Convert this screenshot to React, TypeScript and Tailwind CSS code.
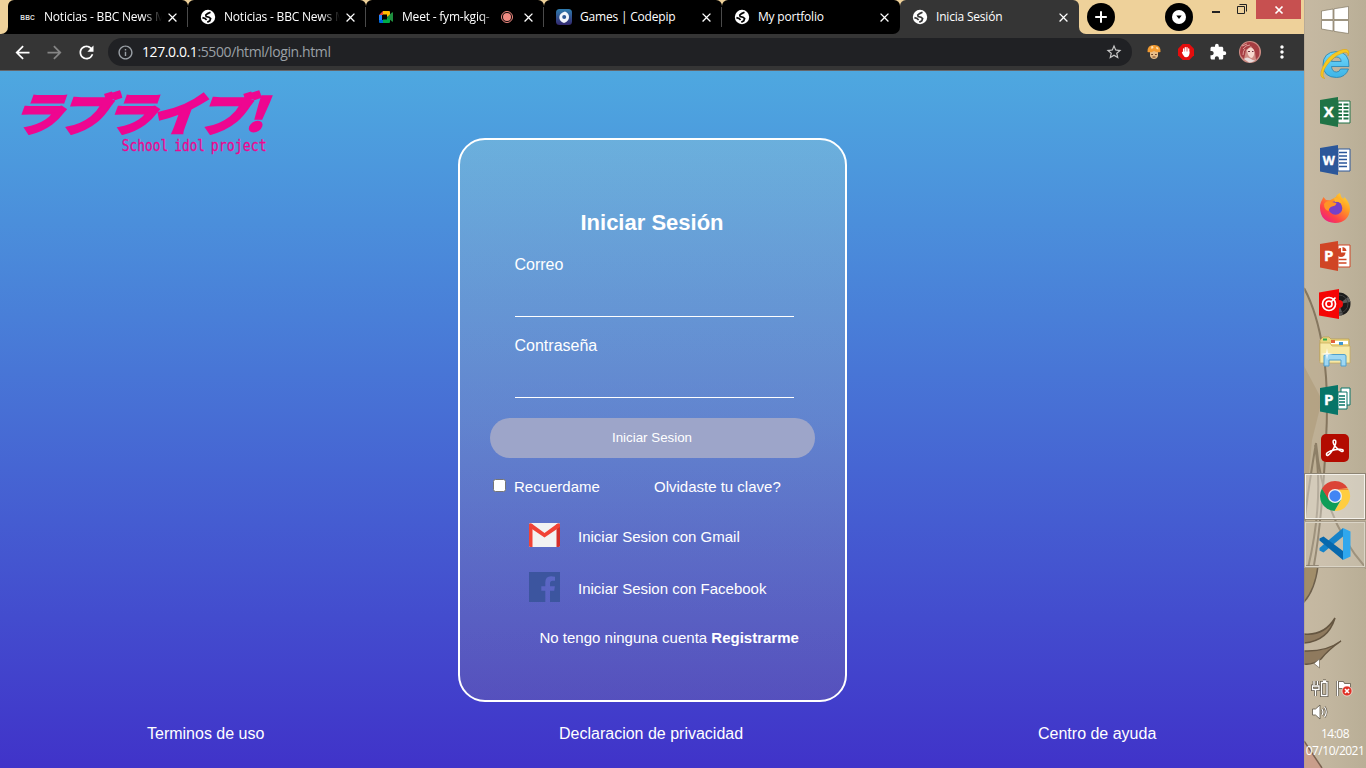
import type { ReactNode } from 'react';
import {
  MdArrowBack,
  MdArrowForward,
  MdClose,
  MdExtension,
  MdInfoOutline,
  MdMoreVert,
  MdRefresh,
  MdStarBorder,
} from 'react-icons/md';

const UI = "font-['Open_Sans','Noto_Sans',sans-serif]";

function Globe({ hole }: { hole: string }) {
  return (
    <svg width="16" height="16" viewBox="0 0 16 16" className="shrink-0">
      <circle cx="8" cy="8" r="7.200" fill="#fff" />
      <path
        d="M10.500 3.300 7.600 4.600 5.800 6 6.200 7.600 9 8.200 10.600 9.600 9.800 11.800 7.300 13.200M2.400 8.600 5 9.400 6.600 11"
        fill="none"
        stroke={hole}
        strokeWidth="1.700"
      />
    </svg>
  );
}

function BbcIcon() {
  return (
    <svg width="16" height="16" viewBox="0 0 16 16" className="shrink-0">
      <g fontSize="6.600" fontFamily="Liberation Sans" fontWeight="700" fill="#ddd">
        <text x=".3" y="10.500">B</text>
        <text x="5.200" y="10.500">B</text>
        <text x="10" y="10.500">C</text>
      </g>
    </svg>
  );
}

function MeetIcon() {
  return (
    <svg width="16" height="16" viewBox="0 0 16 16" className="shrink-0">
      <path d="M1 6 5 2v4Z" fill="#ea4335" />
      <path d="M1 6h3v5H1Z" fill="#2684fc" />
      <path d="M1 11h4v3H2a1 1 0 0 1-1-1Z" fill="#0066da" />
      <path d="M5 2h6a1 1 0 0 1 1 1v4L9 8V5.500H5Z" fill="#ffba00" />
      <path d="M5 10.500h4V8l3 2v3a1 1 0 0 1-1 1H5Z" fill="#00ac47" />
      <path d="M9 8l5-4.500q1-.6 1 .4v8.200q0 1-1 .4Z" fill="#1e8e3e" />
    </svg>
  );
}

function CodepipIcon() {
  return (
    <svg width="16" height="16" viewBox="0 0 16 16" className="shrink-0">
      <defs>
        <linearGradient id="cp" x1="0" y1="0" x2="0" y2="1">
          <stop offset="0" stopColor="#2f7cae" />
          <stop offset="1" stopColor="#33286f" />
        </linearGradient>
      </defs>
      <rect width="16" height="16" rx="3.500" fill="url(#cp)" />
      <path d="M9 2.500Q13 4 13 8T8 14Q3 12 3.300 8T9 2.500Z" fill="#f3f6fb" />
      <circle cx="8.200" cy="8" r="2" fill="#2e5792" />
    </svg>
  );
}

function Tab({
  icon,
  title,
  first,
  last,
  active,
  recording,
  fade,
}: {
  icon: ReactNode;
  title: string;
  first?: boolean;
  last?: boolean;
  active?: boolean;
  recording?: boolean;
  fade?: boolean;
}) {
  return (
    <div
      className={`flex h-[34px] items-center rounded-t-[6px] ${
        first
          ? 'w-[180px] pl-[12px] pr-[8px]'
          : active
            ? 'w-[179px] pl-[12px] pr-[8px]'
            : 'w-[178px] pl-[12px] pr-[8px]'
      } ${active ? 'bg-[#353535]' : 'bg-black'} ${last ? 'rounded-br-[7px]' : ''}`}
    >
      {icon}
      <div
        className={`${UI} ml-2 min-w-0 flex-1 overflow-hidden whitespace-nowrap text-[12px] leading-[18px] tracking-[-0.2px] text-white ${
          fade ? '[mask-image:linear-gradient(to_right,#000_84%,transparent)]' : ''
        }`}
      >
        {title}
      </div>
      {recording && (
        <svg width="14" height="14" viewBox="0 0 14 14" className="ml-1 shrink-0">
          <circle cx="7" cy="7" r="5.500" fill="none" stroke="#f28b82" strokeWidth="1" />
          <circle cx="7" cy="7" r="4" fill="#f28b82" />
        </svg>
      )}
      <MdClose className={`${fade && !recording ? 'ml-[3px]' : 'ml-[7px]'} size-[15px] shrink-0 text-white`} />
      {!last && !active && <div className="relative left-[8px] -ml-px h-[20px] w-px bg-[#4a4a4a]" />}
    </div>
  );
}

function TabStrip() {
  return (
    <div className="flex h-[34px] bg-[#eed19a]">
      <div className="w-[8px] bg-black">
        <div className="h-full rounded-br-[7px] bg-[#eed19a]" />
      </div>
      <Tab first fade icon={<BbcIcon />} title="Noticias - BBC News M" />
      <Tab fade icon={<Globe hole="#000" />} title="Noticias - BBC News M" />
      <Tab fade icon={<MeetIcon />} title="Meet - fym-kgiq-" recording />
      <Tab icon={<CodepipIcon />} title="Games | Codepip" />
      <div className="bg-[linear-gradient(to_bottom,#eed19a_8px,#353535_8px)]">
        <Tab last icon={<Globe hole="#000" />} title="My portfolio" />
      </div>
      <Tab active icon={<Globe hole="#353535" />} title="Inicia Sesión" />
      <div className="flex-1 bg-[#353535]">
        <div className="flex h-full rounded-bl-[7px] bg-[#eed19a] pl-[7px]">
          <svg width="30" height="34" viewBox="0 0 30 34">
            <circle cx="15" cy="17" r="14" fill="#000" />
            <path d="M15 11.200v11.600M9.200 17h11.600" stroke="#fff" strokeWidth="2" />
          </svg>
          <svg width="30" height="34" viewBox="0 0 30 34" className="ml-[48px]">
            <circle cx="15" cy="17" r="14" fill="#000" />
            <circle cx="15" cy="17" r="7" fill="#fff" />
            <path d="M12.300 15.500h5.400L15 19Z" fill="#000" />
          </svg>
          <svg width="30" height="20" viewBox="0 0 30 20" className="ml-[8px]">
            <path d="M10 12h8" stroke="#222" strokeWidth="2" />
          </svg>
          <svg width="20" height="20" viewBox="0 0 20 20" fill="none" stroke="#222">
            <path d="M5.500 6.500h7v7h-7ZM7.500 4.500h7v7" />
          </svg>
          <div className="ml-auto mr-[3px] flex h-[19px] w-[45px] items-center justify-center bg-[#c75050]">
            <svg width="10" height="10" viewBox="0 0 10 10">
              <path d="M1.500 1.500l7 7M8.500 1.500l-7 7" stroke="#fff" strokeWidth="1.700" />
            </svg>
          </div>
        </div>
      </div>
    </div>
  );
}

function Toolbar() {
  return (
    <div className="flex h-[37px] items-center border-b border-[#65666a] bg-[#353535] pl-[12px] text-white">
      <MdArrowBack className="size-[21px]" />
      <MdArrowForward className="ml-[11px] size-[21px] text-[#858585]" />
      <MdRefresh className="ml-[11px] size-[21px]" />
      <div className="ml-[11px] flex h-[28px] w-[1024px] items-center rounded-full bg-[#202124] pl-[9px] pr-[9px]">
        <MdInfoOutline className="size-[17px] text-[#9aa0a6]" />
        <div className={`${UI} ml-[8px] flex-1 text-[14px] leading-[20px] tracking-[-0.4px] text-[#9aa0a6]`}>
          <span className="text-white">127.0.0.1</span>:5500/html/login.html
        </div>
        <MdStarBorder className="size-[18px] text-[#c8c8c8]" />
      </div>
      <svg width="14" height="16" viewBox="0 0 14 16" className="ml-[15px]">
        <path d="M3 7h8v5q-1 3-4 3T3 12Z" fill="#e9bd87" />
        <path d="M.5 8Q0 1.200 7 1t6.500 7Q10 9 7 7 4 9 .5 8Z" fill="#f39b31" />
        <path d="M4 2.500 6 2l.5 2-2 1ZM9 3l2 .5.500 2-2-.5Z" fill="#ffe3b4" />
        <path d="M4.200 10.500h1.800M8 10.500h1.800M5.500 13h3" stroke="#6b4127" />
      </svg>
      <svg width="16" height="16" viewBox="0 0 16 16" className="ml-[17px]">
        <path d="M4.700 0h6.600L16 4.700v6.600L11.300 16H4.700L0 11.300V4.700Z" fill="#e40d0d" />
        <path
          d="M5.600 9V5M7.300 8V3.600M9 8V3.600M10.700 9V5"
          stroke="#fff"
          strokeWidth="1.300"
          strokeLinecap="round"
        />
        <path d="M5 7.500h6.400v2.500q-.7 3.300-3.200 3.300-2 0-3.400-2.800L3.800 8.500Z" fill="#fff" />
      </svg>
      <MdExtension className="ml-[15px] size-[18px]" />
      <svg width="22" height="22" viewBox="0 0 22 22" className="ml-[12px]">
        <circle cx="11" cy="11" r="11" fill="#cf8d85" />
        <path d="M2 6Q8-1 15 2t5 13l-3 4-1-8-4-6-5 4-2 9-3-3Q0 11 2 6Z" fill="#a63d42" />
        <path d="M8 9q4-5 7 0 1 5-2 8-4 0-5-8Z" fill="#f7d8ce" />
        <path d="M5 18q3-3 7 0t6-1q-4 5-8 4.500Z" fill="#e8dcdc" />
        <path d="M9 10.500h2M13 10.500h1.500" stroke="#703040" />
        <path d="M4 8Q7 4 11 4M4 14q0-4 2-6M3 5l5-2" stroke="#edb7ae" strokeWidth=".8" fill="none" />
      </svg>
      <MdMoreVert className="ml-[11px] size-[20px]" />
    </div>
  );
}

function BrandLogo() {
  return (
    <svg width="256" height="76" viewBox="60 38 768 228" className="ml-[20px] mt-[14px]" fill="#ee0690">
      <g
        transform="translate(0 182) skewX(-20)"
        fontFamily="Noto Sans CJK JP"
        fontWeight="900"
        fontSize="126"
        stroke="#ee0690"
        strokeWidth="5"
      >
        <g transform="scale(1.240 1.080)">
          <text x="22" y="-6">ラ</text>
          <text x="137" y="-6">ブ</text>
          <text x="248" y="-6">ラ</text>
          <text x="360" y="-6">イ</text>
          <text x="474" y="-6">ブ</text>
          <text x="588" y="-6">!</text>
        </g>
      </g>
      <g fontFamily="DejaVu Sans Mono" fontSize="49" stroke="#ee0690" strokeWidth=".8">
        <text x="365" y="235" textLength="140" lengthAdjust="spacingAndGlyphs">School</text>
        <text x="523" y="235" textLength="92" lengthAdjust="spacingAndGlyphs">idol</text>
        <text x="632" y="235" textLength="168" lengthAdjust="spacingAndGlyphs">project</text>
      </g>
    </svg>
  );
}

function LoginCard() {
  return (
    <form className="mt-[67px] flex h-[564px] w-[389px] flex-col rounded-[27px] border-2 border-white bg-[linear-gradient(to_bottom,rgba(227,252,215,0.2),rgba(205,223,184,0.2)_50%,rgba(166,150,132,0.2))] pl-[30px] text-[16px] leading-[18px]">
      <h1 className="mt-[70px] w-[325px] text-center text-[22px] font-bold leading-[26px]">Iniciar Sesión</h1>
      <label className="ml-[25px] mt-[20px] h-[61px] w-[279px] border-b border-white">Correo</label>
      <label className="ml-[25px] mt-[20px] h-[61px] w-[279px] border-b border-white">Contraseña</label>
      <button
        type="button"
        className="mt-[20px] h-[40px] w-[325px] rounded-full bg-[#9da5c9] pb-[1px] text-[13.330px] leading-[15px]"
      >
        Iniciar Sesion
      </button>
      <div className="mt-[20px] flex h-[18px] items-center text-[15px]">
        <span className="mb-[3px] ml-[3.500px] size-[13px] rounded-[2.500px] border border-[#767676] bg-white" />
        <span className="ml-[8px] w-[140px]">Recuerdame</span>
        <span>Olvidaste tu clave?</span>
      </div>
      <div className="ml-[39.500px] mt-[25px] flex h-[30px] items-center text-[15px]">
        <svg width="31" height="24" viewBox="0 0 31 24" className="-mt-[2px]">
          <rect width="31" height="24" rx="1.500" fill="#f2f2f2" />
          <path d="M0 1.500V22.500Q0 24 1.500 24H3.500V1Z" fill="#f14336" />
          <path d="M31 1.500V22.500Q31 24 29.500 24H27.500V1Z" fill="#d32e2a" />
          <path d="M0 1.500Q.3 0 2.500.4L15.500 10 28.500.4Q30.700 0 31 1.500V4L15.500 14.600 0 4Z" fill="#f14336" />
        </svg>
        <span className="ml-[18px] mt-[2px]">Iniciar Sesion con Gmail</span>
      </div>
      <div className="ml-[39.500px] mt-[21px] flex h-[30px] items-center text-[15px]">
        <svg width="31" height="30" viewBox="0 0 31 30">
          <path
            d="M0 0h31v30H21V18.700h4.200l.7-4.400H21v-3q0-2.500 2.500-2.500H26V4.700q-2-.5-4-.5-5.700 0-5.700 6.300v3.800h-4v4.400h4V30H0Z"
            fill="#3c559f"
          />
        </svg>
        <span className="ml-[18px] mt-[4px]">Iniciar Sesion con Facebook</span>
      </div>
      <p className="ml-[50px] mt-[27px] text-[15px]">
        No tengo ninguna cuenta <b>Registrarme</b>
      </p>
    </form>
  );
}

function LoginPage() {
  return (
    <main className="flex flex-1 flex-col bg-[linear-gradient(to_bottom,#4ea8e0,#4033c9)] font-['Liberation_Sans',sans-serif] text-white">
      <div className="grid grid-cols-[1fr_389px_1fr] items-start">
        <BrandLogo />
        <LoginCard />
      </div>
      <footer className="mt-[23px] flex pl-[147px] text-[16px] leading-[18px]">
        <span className="w-[412px]">Terminos de uso</span>
        <span className="w-[479px]">Declaracion de privacidad</span>
        <span>Centro de ayuda</span>
      </footer>
    </main>
  );
}

function OfficeIcon({ letter, color, children }: { letter: string; color: string; children: ReactNode }) {
  return (
    <svg width="32" height="32" viewBox="0 0 32 32">
      {children}
      <path d="M1 4 19 1v30L1 27.500Z" fill={color} />
      <text
        x="9.700"
        y="21"
        fontSize={letter === 'W' ? 12.5 : 15}
        fontWeight="700"
        fontFamily="Open Sans"
        fill="#fff"
        stroke="#fff"
        strokeWidth=".4"
        textAnchor="middle"
      >
        {letter}
      </text>
    </svg>
  );
}

function Slot({ children, state }: { children: ReactNode; state?: 'front' | 'open' }) {
  return (
    <div className="flex h-[48px] items-center justify-center px-px">
      <div
        className={`flex h-[45px] w-[61px] items-center justify-center ${
          state === 'front'
            ? 'border border-[#f4f1ea] bg-white/35 outline outline-[#8d8473]'
            : state === 'open'
              ? 'border border-[#dad4c6] bg-white/15 outline outline-[#aaa08d]'
              : ''
        }`}
      >
        {children}
      </div>
    </div>
  );
}

function Taskbar() {
  return (
    <aside className="relative flex w-[62px] flex-col bg-[linear-gradient(to_right,#c6b9a2,#c2b69f_40%,#b9ae96)]">
      <svg className="absolute inset-0" width="62" height="768" viewBox="0 0 62 768" fill="none">
        <path d="M0 366V530L8 440 18 400Z" fill="#aa9674" opacity=".5" />
        <path d="M0 288Q22 340 23 400T4 600H0Z" fill="#aa9674" opacity=".25" />
        <path d="M0 288Q13 312 19 350T22 440Q18 520 10 565" stroke="#75664f" strokeWidth="2" opacity=".8" />
        <path d="M12 443Q19 520 62 568M12 443Q4 490 0 525M11 445Q20 500 4 568" stroke="#8d7f67" strokeWidth="2" />
        <path d="M14 566Q11 590 0 602V566Z" fill="#a18d69" stroke="#6e604c" strokeWidth="1.500" />
        <path d="M0 634Q20 636 31 618 24 641 0 643Z" fill="#8f7a5e" stroke="#655641" strokeWidth="1.500" />
        <path d="M0 651Q22 652 37 641 24 650 17 659 9 665 0 664Z" fill="#8f7a5e" stroke="#655641" strokeWidth="1.500" />
        <path d="M0 741 18 768H0Z" fill="#c99e8b" />
        <path d="M0 741 18 768" stroke="#7a614f" strokeWidth="1.500" />
        <path d="M.5 0v768" stroke="#a99e8b" strokeOpacity=".5" />
      </svg>
      <div className="relative flex h-[40px] items-center justify-center">
        <svg width="28" height="28" viewBox="0 0 28 28" fill="#fff" stroke="#817762" strokeWidth=".7">
          <path d="M.5 5 12 3v10.500H.5ZM13 2.800 27.500 .5v13H13ZM.5 14.500H12V25L.5 23ZM13 14.500h14.500v13L13 25.300Z" />
        </svg>
      </div>
      <div className="relative">
        <Slot>
          <svg width="32" height="32" viewBox="0 0 32 32" fill="none">
            <defs>
              <linearGradient id="ie" x1="0" y1="0" x2="0" y2="1">
                <stop offset="0" stopColor="#72d7fa" />
                <stop offset="1" stopColor="#3cb4e8" />
              </linearGradient>
            </defs>
            <path
              d="M30 18.500Q30.500 4 17.500 3.500 4 4 4 17 4.500 29.500 17.500 29.500q9 0 12-8.500h-8q-1 3-4 3-4.500 0-5-5.500ZM12.500 13.500q.8-4.500 5-4.500t4.700 4.500Z"
              fill="url(#ie)"
              stroke="#2681b0"
              strokeWidth=".8"
            />
            <path
              d="M6 30.500Q-1 30 3.500 19.500T16 5Q26-1 29.500 2.800q1.200 2-.5 5.200.5-4.500-4-3.500-7 1.500-14 9T4 27q0 2.800 2 3.500Z"
              fill="#f8c91f"
              stroke="#d69b13"
              strokeWidth=".5"
            />
          </svg>
        </Slot>
        <Slot>
          <OfficeIcon letter="X" color="#1f7346">
            <path d="M19 5h12v22H19Z" fill="#fff" stroke="#1f7346" />
            <path
              d="M19 8.500h4M19 12h4M19 15.500h4M19 19h4M19 22.500h4M24.500 8.500h5M24.500 12h5M24.500 15.500h5M24.500 19h5M24.500 22.500h5"
              stroke="#1f7346"
              strokeWidth="2"
            />
          </OfficeIcon>
        </Slot>
        <Slot>
          <OfficeIcon letter="W" color="#2b579a">
            <path d="M19 5h12v22H19Z" fill="#fff" stroke="#2b579a" />
            <path d="M20 8.500h8M20 12h8M20 15.500h8M20 19h8M20 22.500h8" stroke="#2b579a" strokeWidth="1.300" />
          </OfficeIcon>
        </Slot>
        <Slot>
          <svg width="32" height="32" viewBox="0 0 32 32">
            <defs>
              <linearGradient id="ff" x1="1" y1="0" x2=".2" y2="1">
                <stop offset="0" stopColor="#ffe83a" />
                <stop offset=".4" stopColor="#ff9a24" />
                <stop offset=".75" stopColor="#ff4247" />
                <stop offset="1" stopColor="#e91d89" />
              </linearGradient>
            </defs>
            <path
              d="M2 10 4.500 5 7 8l4 .3L17 5q0-2 4-4 .5 4 3.500 6l1-2Q31 11 31 17 30 30.500 16 31 1.500 30 1 16q0-4 1-6Z"
              fill="url(#ff)"
            />
            <circle cx="16.500" cy="16" r="6.800" fill="#7541c9" />
            <path d="M5 12q3-5 8-2l4.500 1q-.5 3-4.500 3.500-3.500 1.500-3.300 4.500Q5 18 5 12Z" fill="#ff9426" />
            <path d="M15 6q4-1 7 2l2 5q-3-4-8-3Z" fill="#ffb32c" />
          </svg>
        </Slot>
        <Slot>
          <OfficeIcon letter="P" color="#d04525">
            <path d="M19 5h12v22H19Z" fill="#fff" stroke="#d04525" />
            <path d="M19.500 19.500h8M19.500 23h8" stroke="#d04525" strokeWidth="1.500" />
            <path d="M22 8v4.500h4.500A4.500 4.500 0 1 1 22 8ZM23.500 7a4.500 4.500 0 0 1 4 4h-4Z" fill="#d04525" />
          </OfficeIcon>
        </Slot>
        <Slot>
          <svg width="32" height="32" viewBox="0 0 32 32" fill="none">
            <circle cx="20" cy="16" r="11.500" fill="#1b1b1b" />
            <path d="M20 16 29 9q2 2 2.500 5ZM20 16l-1 11.500 5-1Z" fill="#5c5c5c" />
            <circle cx="20" cy="16" r="9" stroke="#404040" />
            <circle cx="20" cy="16" r="4" fill="#f10c0c" />
            <path d="M0 4.500 20 1v30L0 27.500Z" fill="#f50505" />
            <circle cx="10" cy="16" r="6.500" stroke="#fff" strokeWidth="1.700" />
            <circle cx="10" cy="16" r="3" stroke="#fff" strokeWidth="1.700" />
            <path d="m12 14 4.500-4.500" stroke="#fff" strokeWidth="1.700" />
          </svg>
        </Slot>
        <Slot>
          <svg width="32" height="32" viewBox="0 0 32 32">
            <path d="M1 4 4 1h6l2 2h18v22H1Z" fill="#ecd680" stroke="#b79c49" strokeWidth=".7" />
            <path d="M12 5h17v3H12Z" fill="#fff" />
            <path d="M4 2.500h4v2H4Z" fill="#31a84e" />
            <path d="M12 4h4v3h-4Z" fill="#e2613a" />
            <path d="M20 6h4v3h-4Z" fill="#3d96d1" />
            <path d="M1 7h10l2 3h18v17H1Z" fill="#f7e9a7" stroke="#c5aa58" strokeWidth=".7" />
            <path d="M5 30V20q0-1.500 2-1.500h18q2 0 2 1.500v10h-5v-6H10v6Z" fill="#9ed7f3" stroke="#509fcc" />
            <path d="m8 12 1 5 5 1-5 1-1 5-1-5-5-1 5-1Z" fill="#fff" opacity=".8" />
          </svg>
        </Slot>
        <Slot>
          <OfficeIcon letter="P" color="#077568">
            <path d="M22 4h9v17h-9Z" fill="#fff" stroke="#077568" />
            <path d="M19 8h9v17h-9Z" fill="#fff" stroke="#077568" />
            <path d="M20 12h6M20 15h6M20 18h6M20 21h6" stroke="#077568" strokeWidth="1.500" />
          </OfficeIcon>
        </Slot>
        <Slot>
          <svg width="30" height="30" viewBox="0 0 30 30" fill="none">
            <rect x="1" y="1" width="28" height="28" rx="5" fill="#b30b00" />
            <path
              d="M14.500 7q2 0 1 4-1 4-5 9-3 3.500-4 1.800-.7-1.800 4-3.800 5-2 9.500-1.800 3.500.2 3.200 1.800-.8 1.500-4.200-1-5-4-5.800-7.500Q12.800 7 14.500 7Z"
              stroke="#fff"
              strokeWidth="1.500"
            />
          </svg>
        </Slot>
        <Slot state="front">
          <svg width="32" height="32" viewBox="0 0 32 32">
            <path d="M3 8.500A15 15 0 0 1 29 8.500L16 9.500 9.500 20Z" fill="#db4437" />
            <path d="M29 8.500A15 15 0 0 1 15.500 31L22.500 19.500 20 9Z" fill="#ffcd40" />
            <path d="M3 8.500A15 15 0 0 0 15.500 31l6.500-11.200L11 21Z" fill="#0f9d58" />
            <path d="M3 8.500 10 20.200 13 10ZM16 9h13l.3.500H16Z" fill="#db4437" />
            <circle cx="16" cy="16" r="7" fill="#f1f1f1" />
            <circle cx="16" cy="16" r="5.700" fill="#4285f4" />
          </svg>
        </Slot>
        <Slot state="open">
          <svg width="34" height="34" viewBox="0 0 34 34">
            <path d="M25 1V9.500L5.500 25.500 1.500 23.500V21Z" fill="#1683c9" />
            <path d="M1.500 11.500 5.500 9.500 25 24v9L1.500 13.500Z" fill="#0768ad" />
            <path d="M25 1 32.500 4.500v25L25 33Z" fill="#30a7ed" />
          </svg>
        </Slot>
      </div>
      <div className="relative mt-[90px] flex flex-col">
        <svg width="62" height="66" viewBox="0 0 62 66" fill="none">
          <path d="M15.500 1v9L10 5.500Z" fill="#fff" stroke="#756b5a" strokeWidth=".7" />
          <g stroke="#5d5547" strokeWidth="2.800">
            <path d="M10 23v4M13.500 23v4M8.500 28h6.500v3.500H8.500ZM11.500 31v7M17.500 24.500h5.500v13h-5.500ZM19 23h3" />
          </g>
          <g stroke="#fff" strokeWidth="1.300">
            <path d="M10 23v4M13.500 23v4M8.500 28h6.500v3.500H8.500ZM11.500 31v7M17.500 24.500h5.500v13h-5.500ZM19 23h3" />
          </g>
          <path d="M33.500 23v15" stroke="#5d5547" strokeWidth="3" />
          <path d="M33.500 23v15" stroke="#fff" strokeWidth="1.500" />
          <path d="M34.500 23.500h5l1 2h6v7h-7l-1-2h-4Z" fill="#fff" stroke="#5d5547" strokeWidth=".8" />
          <circle cx="43" cy="33" r="5" fill="#df3024" stroke="#fff" strokeWidth=".6" />
          <path d="m41 31 4 4M45 31l-4 4" stroke="#fff" strokeWidth="1.600" />
          <path d="M8.500 51h3L16 47v14l-4.500-4h-3Z" fill="#fff" stroke="#5d5547" strokeWidth=".8" />
          <path d="M18 51q2 3 0 6M20.500 49q3.500 5 0 10" stroke="#5d5547" strokeWidth="2.400" />
          <path d="M18 51q2 3 0 6M20.500 49q3.500 5 0 10" stroke="#fff" strokeWidth="1.200" />
        </svg>
        <div className={`${UI} mt-px text-center text-[12px] leading-[17px] tracking-[-0.500px] text-white`}>
          <div>14:08</div>
          <div className="whitespace-nowrap">07/10/2021</div>
        </div>
      </div>
    </aside>
  );
}

export default function App() {
  return (
    <div className="flex h-[768px] w-[1366px] overflow-hidden">
      <div className="flex w-[1304px] flex-col">
        <TabStrip />
        <Toolbar />
        <LoginPage />
      </div>
      <Taskbar />
    </div>
  );
}
